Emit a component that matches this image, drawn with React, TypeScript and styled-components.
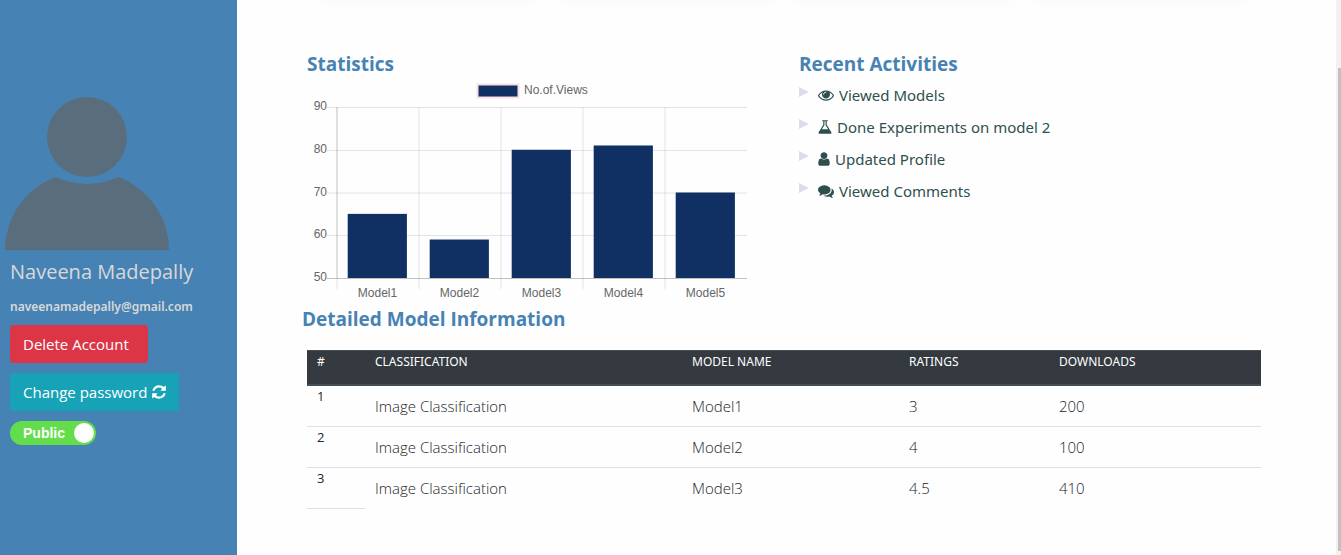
import React from "react";
import styled, { createGlobalStyle } from "styled-components";

const GlobalStyle = createGlobalStyle`
  *, *::before, *::after { box-sizing: border-box; }
  body {
    margin: 0;
    background: #fefefe;
    color: #212529;
    font-family: "Open Sans", "Noto Sans", sans-serif;
    font-size: 16px;
    line-height: 24px;
  }
`;

const Page = styled.div`
  display: flex;
  min-height: 100vh;
`;

const Sidebar = styled.aside`
  flex: 0 0 237px;
  display: flex;
  flex-direction: column;
  align-items: flex-start;
  padding: 97px 10px 0;
  background: #4682b4;
  color: #d8d8d8;
`;

const Avatar = styled.svg`
  display: block;
  margin-left: -5px;
  fill: #5a6d7c;
`;

const UserName = styled.h1`
  margin: 8px 0 0;
  font-size: 20px;
  line-height: 28px;
  font-weight: 400;
`;

const Email = styled.p`
  margin: 9px 0 6px;
  font-family: "Noto Sans", "Open Sans", sans-serif;
  font-size: 12px;
  line-height: 24px;
  font-weight: 600;
`;

const Button = styled.button<{ $color: string }>`
  display: flex;
  align-items: center;
  gap: 5px;
  min-width: 138px;
  height: 38px;
  margin: 0 0 10px;
  padding: 0 13px;
  border: 0;
  border-radius: 4px;
  background: ${(p) => p.$color};
  color: #fff;
  font: inherit;
  font-size: 15px;
`;

const Toggle = styled.label`
  display: flex;
  align-items: center;
  justify-content: space-between;
  width: 86px;
  height: 24px;
  padding: 0 2px 0 13px;
  border-radius: 12px;
  background: #64dd4c;
  color: #fff;
  font: bold 14px/24px "Liberation Sans", Arial, sans-serif;
`;

const Knob = styled.input`
  appearance: none;
  width: 20px;
  height: 20px;
  margin: 0;
  border-radius: 50%;
  background: #fff;
`;

const Main = styled.main`
  flex: 1;
  min-width: 0;
  padding: 0 80px 46px 70px;
`;

const CardRow = styled.div`
  display: flex;
  height: 52px;
  gap: 44px;
  padding: 0 22px;
`;

const Card = styled.div`
  flex: 1;
  height: 1px;
  margin-top: -1px;
  box-shadow: 0 -8px 16px 8px rgba(0, 0, 0, 0.04);
`;

const Columns = styled.div`
  display: grid;
  grid-template-columns: 1fr 1fr;
  gap: 30px;
`;

const Heading = styled.h2`
  margin: 0 0 4px;
  color: #4682b4;
  font-size: 19px;
  line-height: 24px;
  font-weight: 700;
`;

const TableHeading = styled(Heading)`
  margin: 2px 0 19px -5px;
`;

const Chart = styled.svg`
  display: block;
  width: 100%;
  max-width: 450px;
  height: auto;
  fill: #666;
  font: 12px "Liberation Sans", Arial, sans-serif;
`;

const Activities = styled.ul`
  margin: 0;
  padding: 0;
  list-style: none;
  color: #2f4f4f;
`;

const Activity = styled.li`
  display: flex;
  align-items: center;
  gap: 5px;
  height: 32px;
  padding-bottom: 2px;
  font-family: "Noto Sans", "Open Sans", sans-serif;
  font-size: 15px;
`;

const Marker = styled.svg`
  align-self: flex-start;
  margin: 7px 4px 0 0;
  fill: #dcdcec;
`;

const Table = styled.table`
  width: 100%;
  table-layout: fixed;
  border-collapse: separate;
  border-spacing: 0;
  text-align: left;
`;

const IndexCol = styled.col`width: 58px;`;
const ClassCol = styled.col`width: 317px;`;
const ModelCol = styled.col`width: 217px;`;
const RatingCol = styled.col`width: 150px;`;

const HeadCell = styled.th`
  height: 36px;
  padding: 0 10px 12px;
  border-top: 1px solid #454d55;
  border-bottom: 2px solid #454d55;
  background: #343a40;
  color: #fff;
  font-family: "Noto Sans", "Open Sans", sans-serif;
  font-size: 12px;
  line-height: 20px;
  font-weight: 400;
`;

const IndexCell = styled.th`
  height: 41px;
  padding: 0 10px;
  border-bottom: 1px solid #dee2e6;
  font-size: 13px;
  line-height: 20px;
  font-weight: 400;
  vertical-align: top;
`;

const Cell = styled.td`
  padding: 0 10px;
  border-bottom: 1px solid #dee2e6;
  font-size: 15px;
  font-weight: 300;
  tr:last-child > & { border-bottom-color: transparent; }
`;

const ScrollTrack = styled.div`
  position: fixed;
  top: 0;
  right: 0;
  bottom: 0;
  width: 5px;
  padding: 68px 0 4px 2px;
  background: #f1f1f1;
`;

const ScrollThumb = styled.div`
  height: 100%;
  background: #c1c1c1;
`;

const EYE =
  "M1664 960q-152-236-381-353 61 104 61 225 0 185-131.5 316.5t-316.5 131.5-316.5-131.5-131.5-316.5q0-121 61-225-229 117-381 353 133 205 333.5 326.5t434.5 121.5 434.5-121.5 333.5-326.5zm-720-384q0-20-14-34t-34-14q-125 0-214.5 89.5t-89.5 214.5q0 20 14 34t34 14 34-14 14-34q0-86 61-147t147-61q20 0 34-14t14-34zm848 384q0 34-20 69-140 230-376.5 368.5t-499.5 138.5-499.5-139-376.5-368q-20-35-20-69t20-69q140-229 376.5-368t499.5-139 499.5 139 376.5 368q20 35 20 69z";
const FLASK =
  "M1591 1448q56 89 21.5 152.5t-140.5 63.5h-1152q-106 0-140.5-63.5t21.5-152.5l503-793v-399h-64q-26 0-45-19t-19-45 19-45 45-19h512q26 0 45 19t19 45-19 45-45 19h-64v399zm-779-725l-272 429h712l-272-429-20-31v-436h-128v436z";
const USER =
  "M1536 1399q0 109-62.5 187t-150.5 78h-854q-88 0-150.5-78t-62.5-187q0-85 8.5-160.5t31.5-152 58.5-131 94-89 134.5-34.5q131 128 313 128t313-128q76 0 134.5 34.5t94 89 58.5 131 31.5 152 8.5 160.5zm-256-887q0 159-112.5 271.5t-271.5 112.5-271.5-112.5-112.5-271.5 112.5-271.5 271.5-112.5 271.5 112.5 112.5 271.5z";
const COMMENTS =
  "M1408 768q0 139-94 257t-256.5 186.5-353.5 68.5q-86 0-176-16-124 88-278 128-36 9-86 16h-3q-11 0-20.5-8t-11.5-21q-1-3-1-6.5t.5-6.5 2-6l2.5-5 3.5-5.5 4-5 4.5-5 4-4.5q5-6 23-25t26-29.5 22.5-29 25-38.5 20.5-44q-124-72-195-177t-71-224q0-139 94-257t256.5-186.5 353.5-68.5 353.5 68.5 256.5 186.5 94 257zm384 256q0 120-71 224.5t-195 176.5q10 24 20.5 44t25 38.5 22.5 29 26 29.5 23 25q1 1 4 4.5t4.5 5 4 5 3.5 5.5l2.5 5 2 6 .5 6.5-1 6.5q-3 14-13 22t-22 7q-50-7-86-16-154-40-278-128-90 16-176 16-271 0-472-132 58 4 88 4 161 0 309-45t264-129q125-92 192-212t67-254q0-77-23-152 129 71 204 178t75 230z";
const REFRESH =
  "M1639 1056q0 5-1 7-64 268-268 434.5t-478 166.5q-146 0-282.5-55t-243.5-157l-129 129q-19 19-45 19t-45-19-19-45v-448q0-26 19-45t45-19h448q26 0 45 19t19 45-19 45l-137 137q71 66 161 102t187 36q134 0 250-65t186-179q11-17 53-117 8-23 30-23h192q13 0 22.5 9.5t9.5 22.5zm25-800v448q0 26-19 45t-45 19h-448q-26 0-45-19t-19-45 19-45l138-138q-148-137-349-137-134 0-250 65t-186 179q-11 17-53 117-8 23-30 23h-199q-13 0-22.5-9.5t-9.5-22.5v-7q65-268 270-434.5t480-166.5q146 0 284 55.5t245 156.5l130-129q19-19 45-19t45 19 19 45z";

type IconProps = { path: string; width?: number; viewBox?: string };

const Icon = ({ path, width = 16, viewBox = "0 0 1792 1792" }: IconProps) => (
  <svg width={width} height={16} viewBox={viewBox} fill="currentColor" aria-hidden="true">
    <path d={path} />
  </svg>
);

const activities: { text: string; icon: IconProps }[] = [
  { text: "Viewed Models", icon: { path: EYE } },
  { text: "Done Experiments on model 2", icon: { path: FLASK, width: 14, viewBox: "112 0 1568 1792" } },
  { text: "Updated Profile", icon: { path: USER, width: 12, viewBox: "224 0 1344 1792" } },
  { text: "Viewed Comments", icon: { path: COMMENTS } },
];

const views = [
  { label: "Model1", value: 65 },
  { label: "Model2", value: 59 },
  { label: "Model3", value: 80 },
  { label: "Model4", value: 81 },
  { label: "Model5", value: 70 },
];

const ticks = [
  { value: 90, y: 27.5 },
  { value: 80, y: 70.5 },
  { value: 70, y: 113 },
  { value: 60, y: 155.5 },
  { value: 50, y: 198.5 },
];

const rows = [
  ["Image Classification", "Model1", "3", "200"],
  ["Image Classification", "Model2", "4", "100"],
  ["Image Classification", "Model3", "4.5", "410"],
];

const barTop = (value: number) => 198 - ((value - 50) * 171) / 40;

const ViewsChart = () => (
  <Chart viewBox="0 0 450 225" role="img" aria-label="Number of views per model">
    <rect x="170.5" y="4.5" width="41" height="13" fill="#103063" stroke="#fbdde3" strokeWidth="2" />
    <text x="217" y="14">No.of.Views</text>
    {ticks.map((t) => (
      <g key={t.value}>
        <line x1="20" x2="440" y1={t.y} y2={t.y} stroke="#000" strokeOpacity={t.value === 50 ? 0.24 : 0.1} />
        <text x="20" y={Math.floor(t.y) + 3} textAnchor="end">{t.value}</text>
      </g>
    ))}
    <line x1="30" x2="30" y1="27" y2="198" stroke="#000" strokeOpacity="0.15" />
    {views.map((v, i) => (
      <g key={v.label}>
        <line x1={30 + i * 82} x2={30 + i * 82} y1="27" y2="209" stroke="#000" strokeOpacity="0.1" />
        <rect x={40.7 + i * 82} y={barTop(v.value)} width="59.2" height={198 - barTop(v.value)} fill="#103063" />
        <text x={70.5 + i * 82} y="217" textAnchor="middle">{v.label}</text>
      </g>
    ))}
  </Chart>
);

export default function App() {
  return (
    <Page>
      <GlobalStyle />
      <Sidebar>
        <Avatar width="164" height="153" viewBox="0 0 164 153" aria-hidden="true">
          <circle cx="82" cy="40" r="40" />
          <path d="M0 153A82 79 0 0 1 50 80Q82 94 114 80A82 79 0 0 1 164 153Z" />
        </Avatar>
        <UserName>Naveena Madepally</UserName>
        <Email>naveenamadepally@gmail.com</Email>
        <Button type="button" $color="#dc3545">Delete Account</Button>
        <Button type="button" $color="#17a2b8">
          Change password
          <Icon path={REFRESH} width={14} viewBox="112 0 1568 1792" />
        </Button>
        <Toggle>
          Public
          <Knob type="checkbox" defaultChecked />
        </Toggle>
      </Sidebar>
      <Main>
        <CardRow>
          <Card />
          <Card />
          <Card />
          <Card />
        </CardRow>
        <Columns>
          <section>
            <Heading>Statistics</Heading>
            <ViewsChart />
          </section>
          <section>
            <Heading>Recent Activities</Heading>
            <Activities>
              {activities.map((a) => (
                <Activity key={a.text}>
                  <Marker width="10" height="10" viewBox="0 0 10 10" aria-hidden="true">
                    <path d="M0 0L10 5L0 10Z" />
                  </Marker>
                  <Icon {...a.icon} />
                  {a.text}
                </Activity>
              ))}
            </Activities>
          </section>
        </Columns>
        <TableHeading>Detailed Model Information</TableHeading>
        <Table>
          <colgroup>
            <IndexCol />
            <ClassCol />
            <ModelCol />
            <RatingCol />
            <col />
          </colgroup>
          <thead>
            <tr>
              {["#", "CLASSIFICATION", "MODEL NAME", "RATINGS", "DOWNLOADS"].map((h) => (
                <HeadCell key={h} scope="col">{h}</HeadCell>
              ))}
            </tr>
          </thead>
          <tbody>
            {rows.map((r, i) => (
              <tr key={r[1]}>
                <IndexCell scope="row">{i + 1}</IndexCell>
                {r.map((c, j) => (
                  <Cell key={j}>{c}</Cell>
                ))}
              </tr>
            ))}
          </tbody>
        </Table>
      </Main>
      <ScrollTrack aria-hidden="true">
        <ScrollThumb />
      </ScrollTrack>
    </Page>
  );
}
